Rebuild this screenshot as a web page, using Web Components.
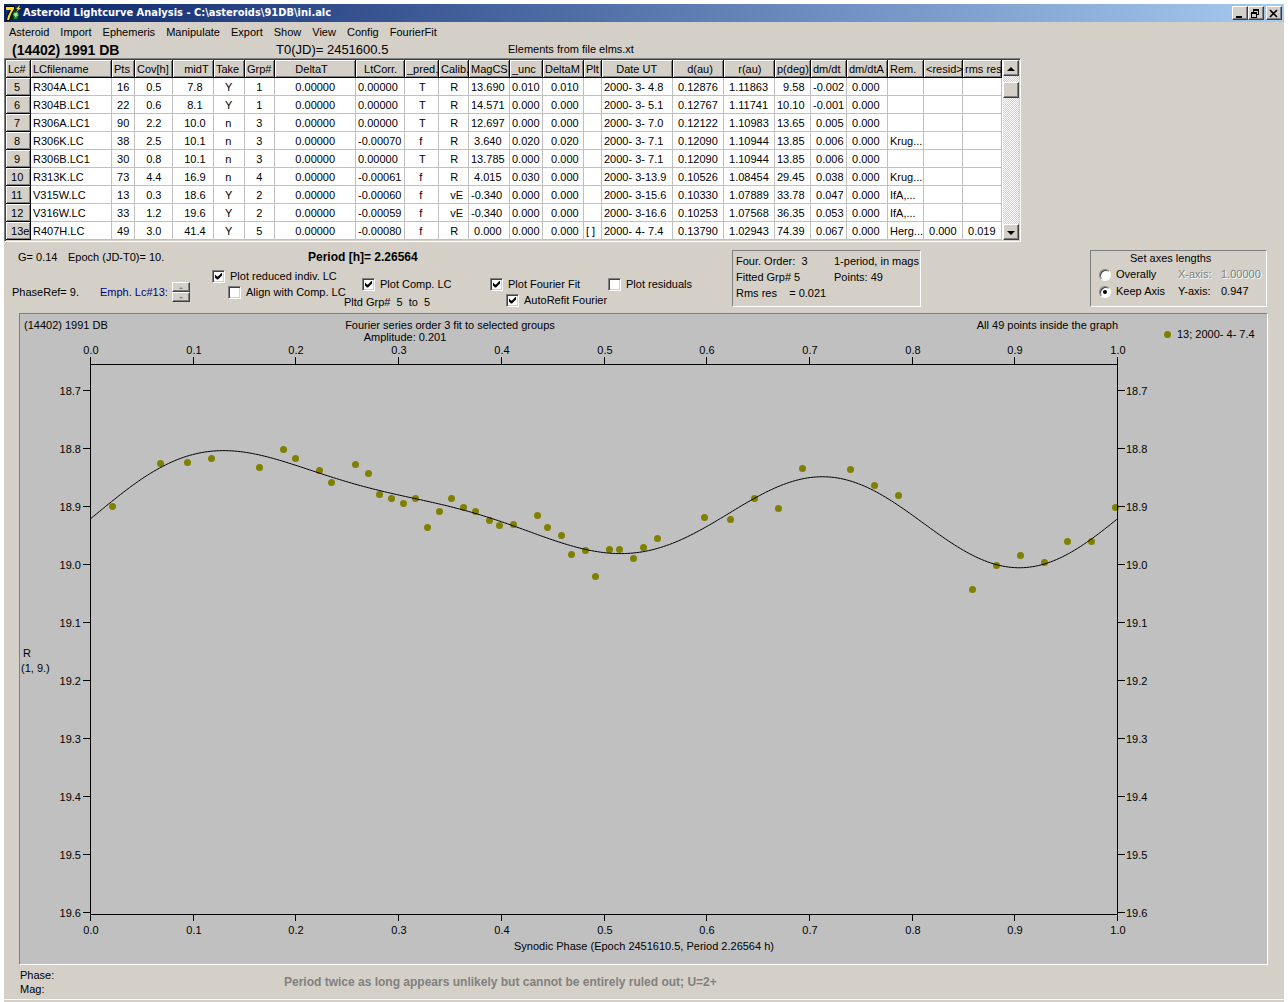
<!DOCTYPE html>
<html lang="en">
<head>
<meta charset="utf-8">
<title>Asteroid Lightcurve Analysis</title>
<style>
:root {
  --face: #d4d0c8;
  --shade: #808080;
  --dark: #404040;
  --ui: "Liberation Sans", Arial, sans-serif;
  --caption: "DejaVu Sans Condensed", Tahoma, sans-serif;
}
body { margin: 0; background: #fff; color: #000; font: 11px/14px var(--ui); }
</style>
</head>
<body>
<app-window>
  <title-bar slot="title">Asteroid Lightcurve Analysis - C:\asteroids\91DB\ini.alc</title-bar>
  <menu-bar items="Asteroid,Import,Ephemeris,Manipulate,Export,Show,View,Config,FourierFit"></menu-bar>
  <object-header></object-header>
  <curve-grid></curve-grid>
  <fit-controls></fit-controls>
  <phase-plot></phase-plot>
  <status-line slot="status"></status-line>
</app-window>

<script>
function define(name, html, setup) {
  customElements.define(name, class extends HTMLElement {
    constructor() {
      super();
      const t = document.createElement('template');
      t.innerHTML = html;
      this.attachShadow({ mode: 'open' }).append(t.content.cloneNode(true));
    }
    connectedCallback() { if (setup) setup(this, this.shadowRoot); }
  });
}

const raised = 'background:var(--face);border:1px solid;border-color:#fff var(--dark) var(--dark) #fff;box-shadow:inset -1px -1px var(--shade);box-sizing:border-box;padding:0;';

define('app-window', `
<style>
:host { display: flex; flex-direction: column; min-height: 100vh; box-sizing: border-box; padding: 4px 4px 0; }
main { flex: 1; background: var(--face); display: flex; flex-direction: column; }
.edge { height: 2px; margin-top: 1px; background: var(--face); }
</style>
<main><slot name="title"></slot><slot></slot><slot name="status"></slot></main>
<div class="edge"></div>`);

define('title-bar', `
<style>
:host { display: flex; align-items: center; height: 18px; padding: 0 2px 0 1px; color: #fff;
  background: linear-gradient(90deg, #0a246a, #a6caf0); font: bold 11px/18px var(--caption); }
.icon { width: 16px; height: 16px; margin-right: 2px; }
h1 { flex: 1; margin: 0; font: inherit; white-space: nowrap; }
button { ${raised} width: 16px; height: 14px; }
button svg { display: block; width: 12px; height: 11px; }
.close { margin-left: 2px; }
</style>
<svg class="icon" viewBox="0 0 16 16" aria-hidden="true">
  <circle cx="10" cy="10" r="5" fill="#0b2a12"/>
  <path d="M8 8q3-3 5-1l1 3-2 4-3 0z" fill="#1d8a3c"/>
  <path d="M9 9l3-1v2l-2 1zM10 12l3-2" stroke="#9fe0a0" fill="#bfe8c0"/>
  <path d="M0 1H10V4L7 9L5 16H1L2 11L5 5H0z" fill="#000"/>
  <path d="M1 2H9V4L6 9L4 15H2L3 11L6 5H1z" fill="#ffe11a"/>
  <path d="M15 0L11 4L13 4L11 7L16 3L14 3z" fill="#ffe11a"/>
</svg>
<h1><slot></slot></h1>
<button aria-label="Minimize"><svg viewBox="0 0 12 11"><path d="M3 8h6v2H3z"/></svg></button>
<button aria-label="Restore"><svg viewBox="0 0 12 11" shape-rendering="crispEdges"><path d="M4 1h6v6H8V6h1V3H5v1H4zM2 4h6v6H2zM3 6v3h4V6z" fill-rule="evenodd"/></svg></button>
<button class="close" aria-label="Close"><svg viewBox="0 0 12 11"><path d="M3 2l7 7M10 2l-7 7" stroke="#000" stroke-width="1.7"/></svg></button>`);

define('menu-bar', `
<style>
:host { display: block; }
nav { display: flex; gap: 11px; height: 20px; padding-left: 5px; }
button { font: 11px/20px var(--ui); color: inherit; background: none; border: 0; padding: 0; }
</style><nav></nav>`, (el, root) => {
  root.querySelector('nav').innerHTML = el.getAttribute('items').split(',').map(t => `<button>${t}</button>`).join('');
});

define('object-header', `
<style>
:host { display: grid; grid-template-columns: 264px 232px 1fr; height: 16px; padding-left: 8px; line-height: 16px; white-space: nowrap; }
h2 { margin: 0; font: bold 14px/16px var(--ui); }
.t0 { font-size: 13px; }
.src { line-height: 14px; }
</style>
<h2>(14402) 1991 DB</h2><span class="t0">T0(JD)= 2451600.5</span><span class="src">Elements from file elms.xt</span>`);

/* Column titles and cells keep the leading blanks that the listing pads them with. */
const columns = [
  ['Lc#', 25], ['LCfilename', 81], ['Pts', 23], ['Cov[h]', 38], ['   midT', 41], ['Take', 31], ['Grp#', 30],
  ['      DeltaT', 81], ['  LtCorr.', 49], ['_pred.', 34], ['Calib.', 30], ['MagCS', 41], ['_unc', 33], ['DeltaM', 41],
  ['Plt', 18], ['    Date UT', 71], ['    d(au)', 51], ['    r(au)', 51], ['p(deg)', 36], ['dm/dt', 36], ['dm/dtA', 41],
  ['Rem.', 36], ['<resid>', 39], ['rms res', 39]];
const rows = [
  '  5|R304A.LC1|16|0.5|    7.8|Y|1|0.00000|T|   R|13.690|0.010|0.010||2000- 3- 4.8|0.12876|1.11863|  9.58|-0.002|0.000|||',
  '  6|R304B.LC1|22|0.6|    8.1|Y|1|0.00000|T|   R|14.571|0.000|0.000||2000- 3- 5.1|0.12767|1.11741|10.10|-0.001|0.000|||',
  '  7|R306A.LC1|90|2.2|   10.0|n|3|0.00000|T|   R|12.697|0.000|0.000||2000- 3- 7.0|0.12122|1.10983|13.65| 0.005|0.000|||',
  '  8|R306K.LC|38|2.5|   10.1|n|3|-0.00070|f|   R| 3.640|0.020|0.020||2000- 3- 7.1|0.12090|1.10944|13.85| 0.006|0.000|Krug...||',
  '  9|R306B.LC1|30|0.8|   10.1|n|3|0.00000|T|   R|13.785|0.000|0.000||2000- 3- 7.1|0.12090|1.10944|13.85| 0.006|0.000|||',
  ' 10|R313K.LC|73|4.4|   16.9|n|4|-0.00061|f|   R| 4.015|0.030|0.000||2000- 3-13.9|0.10526|1.08454|29.45| 0.038|0.000|Krug...||',
  ' 11|V315W.LC|13|0.3|   18.6|Y|2|-0.00060|f|   vE|-0.340|0.000|0.000||2000- 3-15.6|0.10330|1.07889|33.78| 0.047|0.000|IfA,...||',
  ' 12|V316W.LC|33|1.2|   19.6|Y|2|-0.00059|f|   vE|-0.340|0.000|0.000||2000- 3-16.6|0.10253|1.07568|36.35| 0.053|0.000|IfA,...||',
  ' 13e|R407H.LC|49|3.0|   41.4|Y|5|-0.00080|f|   R| 0.000|0.000|0.000|[ ]|2000- 4- 7.4|0.13790|1.02943|74.39| 0.067|0.000|Herg...| 0.000| 0.019'];
const blanks = { 2: 1, 3: 3, 5: 3, 6: 3, 9: 4, 13: 2, 16: 1, 17: 1, 20: 1 };

define('curve-grid', `
<style>
:host { display: flex; align-self: flex-start; box-sizing: border-box; background: #fff;
  border: 1px solid; border-color: var(--shade) #fff #fff var(--shade); padding: 1px;
  box-shadow: inset 1px 1px var(--dark), inset -1px -1px var(--face); }
table { table-layout: fixed; border-collapse: separate; border-spacing: 0; width: 996px; }
th, td { box-sizing: border-box; height: 18px; padding: 1px 0 0 2px; font-weight: normal; text-align: left;
  line-height: 16px; white-space: pre; border: solid #c0c0c0; border-width: 0 1px 1px 0; overflow: hidden; }
th { background: var(--face); border-color: #000; box-shadow: inset 1px 1px #fff, inset -1px -1px var(--shade); }
.bar { width: 16px; margin-left: 1px; display: flex; flex-direction: column;
  background: repeating-conic-gradient(#fff 0 25%, var(--face) 0 50%) 0 0 / 2px 2px; }
.bar > * { ${raised} height: 16px; }
.bar svg { display: block; width: 13px; height: 13px; }
.bar .thumb { margin-top: 6px; margin-bottom: auto; }
</style>
<table><colgroup></colgroup><thead><tr></tr></thead><tbody></tbody></table>
<div class="bar">
  <button aria-label="Scroll up"><svg viewBox="0 0 13 13"><path d="M3 9L7 5L11 9z"/></svg></button>
  <div class="thumb"></div>
  <button aria-label="Scroll down"><svg viewBox="0 0 13 13"><path d="M3 5L7 9L11 5z"/></svg></button>
</div>`, (el, root) => {
  const esc = s => s.replace(/</g, '&lt;').replace(/>/g, '&gt;');
  root.querySelector('colgroup').innerHTML = columns.map(c => `<col style="width:${c[1]}px">`).join('');
  root.querySelector('thead tr').innerHTML = columns.map(c => `<th scope="col">${esc(c[0])}</th>`).join('');
  root.querySelector('tbody').innerHTML = rows.map(line => {
    const c = line.split('|');
    c.splice(7, 0, '      0.00000');
    return '<tr>' + c.map((v, i) => {
      const text = ' '.repeat(v && blanks[i] || 0) + v;
      return i ? `<td>${text}</td>` : `<th scope="row">${text}</th>`;
    }).join('') + '</tr>';
  }).join('');
});

define('tick-box', `
<style>
:host { display: block; }
label { display: flex; align-items: center; gap: 5px; height: 16px; white-space: nowrap; }
input { appearance: none; flex: none; margin: 0; width: 13px; height: 13px; box-sizing: border-box; background: #fff; padding: 2px;
  border: 1px solid; border-color: var(--shade) #fff #fff var(--shade);
  box-shadow: inset 1px 1px var(--dark), inset -1px -1px var(--face); }
input:checked::before { content: ""; display: block; width: 7px; height: 7px; background: #000;
  clip-path: polygon(0 2px, 2px 4px, 3px 4px, 7px 0, 7px 3px, 3px 7px, 2px 7px, 0 5px); }
</style>
<label><input type="checkbox"><slot></slot></label>`, (el, root) => {
  root.querySelector('input').checked = el.hasAttribute('checked');
});

define('sunken-panel', `
<style>
:host { display: block; box-sizing: border-box; border: 1px solid; border-color: var(--shade) #fff #fff var(--shade); }
</style><slot></slot>`);

define('fit-controls', `
<style>
:host { display: flex; justify-content: space-between; padding: 8px 17px 1px 8px; white-space: nowrap; }
.left { width: 720px; display: flex; flex-direction: column; }
.line { display: flex; padding-left: 6px; line-height: 14px; }
.g { width: 50px; } .epoch { width: 240px; }
.line b { font-size: 12px; }
.cols { display: grid; grid-template-columns: 200px 132px 146px 118px 1fr; }
.emph { display: flex; align-items: center; height: 20px; margin-top: 18px; }
.ref { width: 88px; }
.lc { width: 72px; color: #000080; }
.spin { display: flex; flex-direction: column; }
.spin button { ${raised} width: 18px; height: 10px; }
.spin svg { display: block; width: 15px; height: 7px; }
.indiv { padding-top: 4px; }
.c { padding-top: 12px; }
.in { margin-left: 16px; }
.comp { margin-left: 18px; }
.grp { line-height: 20px; white-space: pre; }
.fit { width: 189px; height: 57px; padding: 2px 3px; display: grid; grid-template-columns: 98px 1fr; grid-auto-rows: 16px; line-height: 16px; }
.fit span { white-space: pre; }
.axes { width: 177px; height: 57px; padding: 0 8px; }
.axes .cap { padding-left: 31px; line-height: 15px; }
.row { display: grid; grid-template-columns: 79px 43px 1fr; line-height: 17px; }
.row label { display: flex; align-items: center; gap: 5px; }
.row input { appearance: none; margin: 0; width: 12px; height: 12px; box-sizing: border-box; border-radius: 50%; background: #fff;
  border: 1px solid; border-color: var(--shade) #fff #fff var(--shade); box-shadow: inset 1px 1px var(--dark); padding: 3px; }
.row input:checked::before { content: ""; display: block; width: 4px; height: 4px; border-radius: 50%; background: #000; }
.off { color: var(--shade); text-shadow: 1px 1px #fff; }
</style>
<div class="left">
  <div class="line"><span class="g">G= 0.14</span><span class="epoch">Epoch (JD-T0)= 10.</span><b>Period [h]= 2.26564</b></div>
  <div class="cols">
    <div class="emph"><span class="ref">PhaseRef= 9.</span><span class="lc">Emph. Lc#13:</span>
      <span class="spin">
        <button aria-label="Next lightcurve"><svg viewBox="0 0 15 7"><path d="M6 5L8 3L10 5z" fill="#808080"/></svg></button>
        <button aria-label="Previous lightcurve"><svg viewBox="0 0 15 7"><path d="M6 3L8 5L10 3z" fill="#808080"/></svg></button>
      </span></div>
    <div class="indiv"><tick-box checked>Plot reduced indiv. LC</tick-box><tick-box class="in">Align with Comp. LC</tick-box></div>
    <div class="c"><tick-box class="comp" checked>Plot Comp. LC</tick-box><div class="grp">Pltd Grp#  5  to  5</div></div>
    <div class="c"><tick-box checked>Plot Fourier Fit</tick-box><tick-box class="in" checked>AutoRefit Fourier</tick-box></div>
    <div class="c"><tick-box>Plot residuals</tick-box></div>
  </div>
</div>
<sunken-panel class="fit"><span>Four. Order:  3</span><span>1-period, in mags</span><span>Fitted Grp# 5</span><span>Points: 49</span><span>Rms res    = 0.021</span></sunken-panel>
<div style="flex:1"></div>
<sunken-panel class="axes">
  <div class="cap">Set axes lengths</div>
  <div class="row"><label><input type="radio" name="axes">Overally</label><span class="off">X-axis:</span><span class="off">1.00000</span></div>
  <div class="row"><label><input type="radio" name="axes" checked>Keep Axis</label><span>Y-axis:</span><span>0.947</span></div>
</sunken-panel>`);

/* Least-squares Fourier series of the given order through points [phase, value]. */
function fourierFit(points, order) {
  const basis = p => {
    const b = [1];
    for (let k = 1; k <= order; k++) b.push(Math.cos(2 * Math.PI * k * p), Math.sin(2 * Math.PI * k * p));
    return b;
  };
  const n = 2 * order + 1;
  const m = Array.from({ length: n }, () => new Array(n + 1).fill(0));
  for (const [p, v] of points) {
    const b = basis(p);
    for (let i = 0; i < n; i++) { for (let j = 0; j < n; j++) m[i][j] += b[i] * b[j]; m[i][n] += b[i] * v; }
  }
  for (let i = 0; i < n; i++)
    for (let r = 0; r < n; r++) if (r !== i) {
      const f = m[r][i] / m[i][i];
      for (let j = i; j <= n; j++) m[r][j] -= f * m[i][j];
    }
  const c = m.map((row, i) => row[n] / row[i]);
  return p => basis(p).reduce((s, b, i) => s + b * c[i], 0);
}

define('phase-plot', `
<style>
:host { display: block; margin: 0 16px 0 15px; background: #c0c0c0; border: 1px solid; border-color: var(--shade) #fff #fff var(--shade); }
svg { display: block; width: 100%; height: auto; font: 11px var(--ui); }
.ax { fill: none; stroke: #000; shape-rendering: crispEdges; }
.fit { fill: none; stroke: #000; }
.pt { fill: #808000; }
.mid { text-anchor: middle; } .end { text-anchor: end; }
</style>
<svg viewBox="20 314 1247 650" role="img" aria-label="Composite lightcurve"></svg>`, (el, root) => {
  const left = 90, right = 1117, top = 364, bottom = 914;
  const ticksX = [90, 193, 295, 398, 501, 604, 706, 809, 912, 1014, 1117];
  const observed = [[112,506],[160,463],[187,462],[211,458],[259,467],[283,449],[295,458],[319,470],[331,482],[355,464],[368,473],[379,494],[391,498],[403,503],[415,498],[427,527],[439,511],[451,498],[463,507],[475,511],[489,520],[499,525],[513,524],[537,515],[547,527],[561,535],[571,554],[585,550],[595,576],[609,549],[619,549],[633,558],[643,547],[657,538],[704,517],[730,519],[754,498],[778,508],[802,468],[850,469],[874,485],[898,495],[972,589],[996,565],[1020,555],[1044,562],[1067,541],[1091,541],[1115,507]];
  const normal = [[90,518],[112,502],[160,467],[187,455],[210,451],[224,450],[239,451],[259,454],[295,465],[319,473],[355,484],[380,490],[403,495],[427,501],[451,507],[475,513],[513,525],[537,534],[561,542],[586,550],[604,552],[620,553],[635,552],[657,548],[679,540],[704,527],[730,512],[754,498],[779,486],[802,478],[821,476],[832,477],[850,480],[874,490],[898,505],[922,523],[947,540],[972,555],[996,564],[1018,567],[1032,566],[1044,563],[1067,554],[1091,538],[1117,518]];
  const curve = fourierFit(normal.map(([x, y]) => [(x - left) / (right - left), y]), 3);
  let axes = `M${left}.5 ${top}.5H${right}.5V${bottom}.5H${left}.5z`, out = '', line = '';
  ticksX.forEach((x, i) => {
    axes += `M${x}.5 ${top}v-7M${x}.5 ${bottom}v7`;
    const t = (i / 10).toFixed(1);
    out += `<text class="mid" x="${x + 1}" y="354">${t}</text><text class="mid" x="${x + 1}" y="934">${t}</text>`;
  });
  for (let i = 0; i < 10; i++) {
    const y = 390 + 58 * i, t = (18.7 + i / 10).toFixed(1);
    axes += `M${left} ${y}.5h-7M${right} ${y}.5h8`;
    out += `<text class="end" x="81" y="${y + 5}">${t}</text><text x="1126" y="${y + 5}">${t}</text>`;
  }
  for (let x = left; x <= right; x += 3)
    line += (x > left ? 'L' : 'M') + (x + 0.5) + ' ' + (curve((x - left) / (right - left)) + 0.5).toFixed(2);
  line += `L${right + 0.5} ${(curve(1) + 0.5).toFixed(2)}`;
  out += observed.map(([x, y]) => `<circle class="pt" cx="${x + 0.5}" cy="${y + 0.5}" r="3.5"/>`).join('');
  out += `<path class="ax" d="${axes}"/><path class="fit" d="${line}"/>
    <text x="24" y="329">(14402) 1991 DB</text>
    <text class="mid" x="450" y="329">Fourier series order 3 fit to selected groups</text>
    <text class="mid" x="405" y="341">Amplitude: 0.201</text>
    <text class="end" x="1118" y="329">All 49 points inside the graph</text>
    <circle class="pt" cx="1167.5" cy="334.5" r="3.5"/><text x="1177" y="338">13; 2000- 4- 7.4</text>
    <text x="23" y="657">R</text><text x="21" y="672">(1, 9.)</text>
    <text class="mid" x="644" y="950">Synodic Phase (Epoch 2451610.5, Period 2.26564 h)</text>`;
  root.querySelector('svg').innerHTML = out;
});

define('status-line', `
<style>
:host { display: grid; grid-template-columns: 264px 1fr; align-items: center; padding: 3px 0 3px 16px; }
b { font-size: 12px; color: var(--shade); }
</style>
<div><div>Phase:</div><div>Mag:</div></div><b>Period twice as long appears unlikely but cannot be entirely ruled out; U=2+</b>`);
</script>
</body>
</html>
